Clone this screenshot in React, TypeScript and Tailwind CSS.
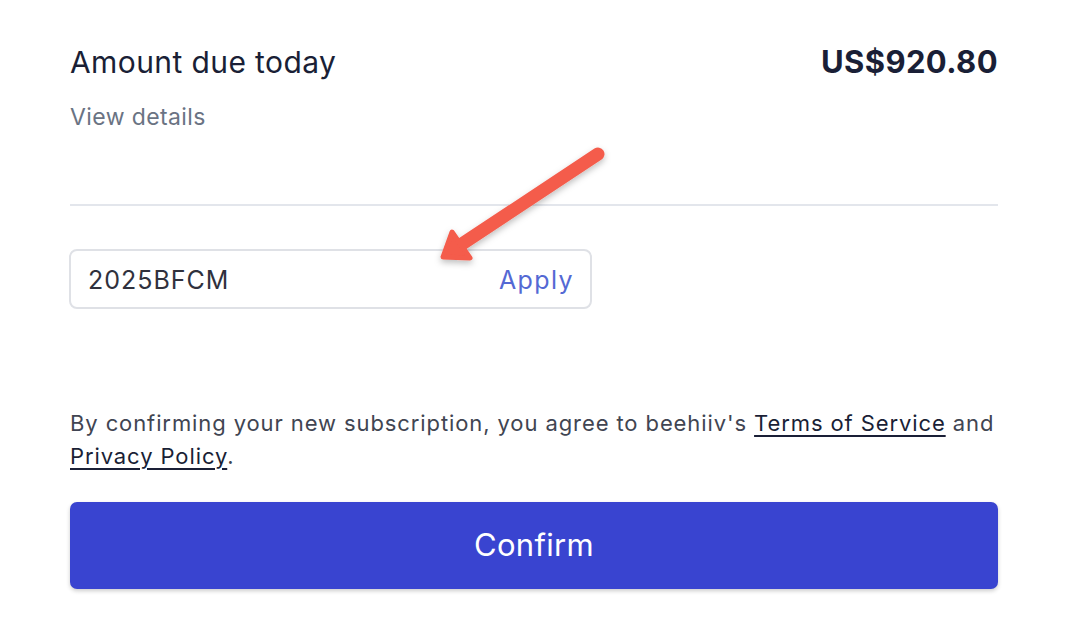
import React from 'react'

const font = { fontFamily: 'Inter, "Noto Sans", sans-serif' }

function Arrow() {
  return (
    <svg
      className="pointer-events-none absolute left-0 top-0"
      width="1078"
      height="620"
      viewBox="0 0 1078 620"
    >
      <defs>
        <filter id="sh" x="-20%" y="-20%" width="140%" height="140%">
          <feDropShadow dx="0" dy="3" stdDeviation="3" floodColor="#000" floodOpacity="0.25" />
        </filter>
      </defs>
      <g filter="url(#sh)" fill="#f45b4b" stroke="#f45b4b" strokeLinecap="round" strokeLinejoin="round">
        <line x1="598" y1="154" x2="462" y2="244" strokeWidth="13" />
        <polygon points="443,257 452,232 470,258" strokeWidth="5" />
      </g>
    </svg>
  )
}

export default function App() {
  return (
    <div className="relative h-[620px] w-[1078px] overflow-hidden bg-white" style={font}>
      <div className="ml-[70px] w-[928px] pt-[42px]">
        <div className="flex items-center justify-between">
          <span className="text-[30px] leading-[40px] tracking-[0.4px] text-[#1a1f36]">Amount due today</span>
          <span className="text-[31px] font-bold leading-[40px] tracking-[0.4px] text-[#1a1f36]">US$920.80</span>
        </div>
        <div className="mt-[20px] text-[23px] leading-[30px] tracking-[0.4px] text-[#6a7383]">View details</div>

        <div className="mt-[72px] h-[2px] bg-[#e3e6ec]" />

        <div className="mt-[43px] flex h-[60px] w-[523px] -ml-px items-center justify-between rounded-[8px] border-2 border-[#dfe1e6] pl-[17px] pr-[16px] pt-[3px]">
          <span className="text-[25px] tracking-[1px] text-[#30313d]">2025BFCM</span>
          <span className="text-[25px] tracking-[1.4px] text-[#5469d4]">Apply</span>
        </div>

        <p className="mt-[98px] text-[22px] leading-[33px] tracking-[0.9px] text-[#414552]">
          By confirming your new subscription, you agree to beehiiv's{' '}
          <span className="text-[#1a1f36] underline decoration-[2px] underline-offset-[4px]">Terms of Service</span> and{' '}
          <span className="text-[#1a1f36] underline decoration-[2px] underline-offset-[4px]">Privacy Policy</span>.
        </p>

        <button className="mt-[29px] flex h-[87px] w-full items-center justify-center rounded-[7px] bg-[#3944d0] text-[31px] tracking-[0.3px] text-white shadow-[0_2px_4px_rgba(0,0,0,0.2)]">
          Confirm
        </button>
      </div>
      <Arrow />
    </div>
  )
}
